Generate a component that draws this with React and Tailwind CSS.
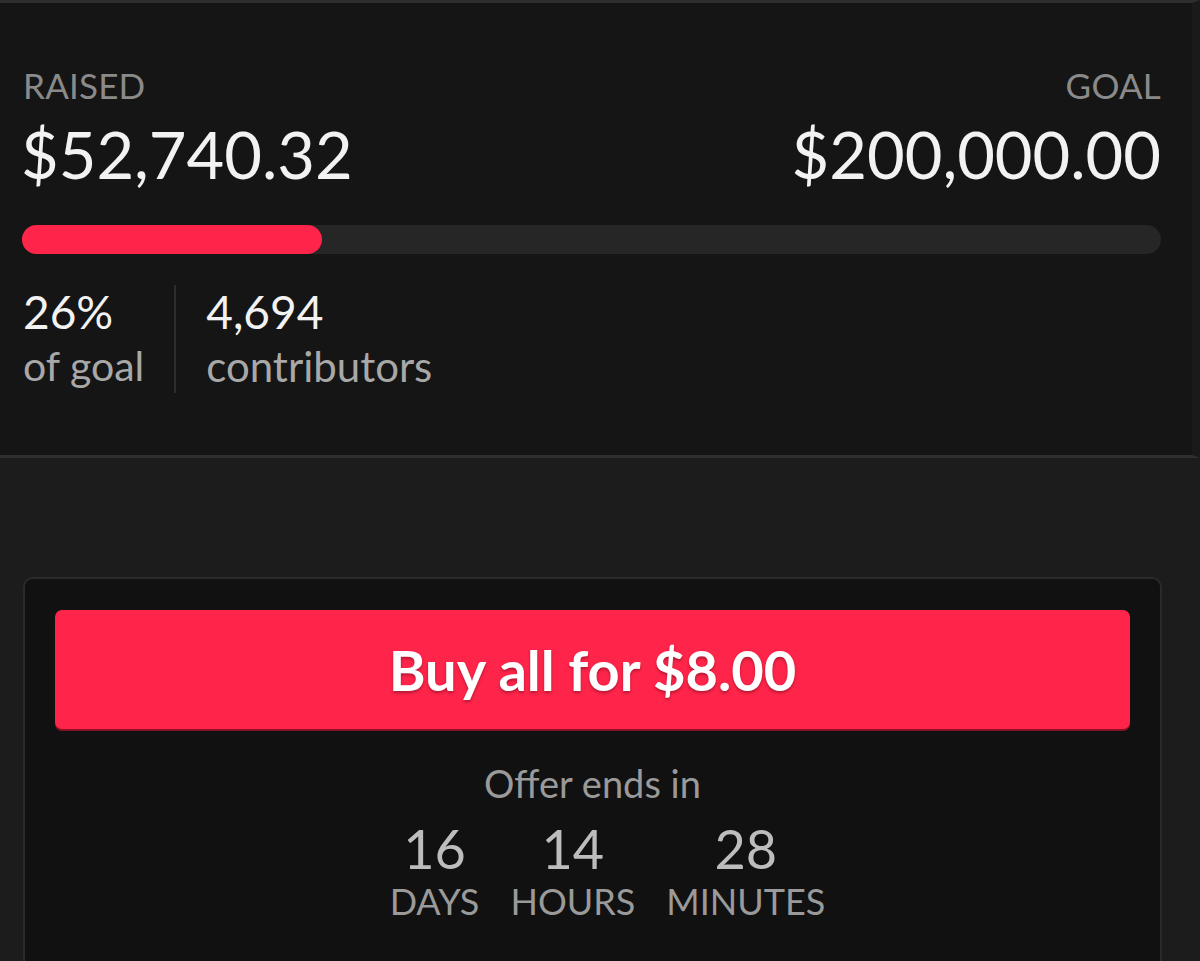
import React from "react";

const raised = 52740.32;
const goal = 200000;

export default function App() {
  const pct = (raised / goal) * 100;

  return (
    <div className="min-h-[961px] w-[1200px] bg-[#1c1c1c] font-['Lato','Noto_Sans',sans-serif] overflow-hidden">
      {/* Funding summary */}
      <section className="bg-[#151515] border-t-[3px] border-[#2e2e2e] border-b-[3px] border-b-[#2f2f2f] border-r-[8px] border-r-[#1a1a1a] pl-[23px] pr-[31px] pt-[61px] h-[458px]">
        <div className="flex justify-between">
          <div>
            <div className="text-[35px] leading-[42px] text-[#8a8a8a] tracking-[0.2px]">RAISED</div>
            <div className="mt-[8px] text-[65px] leading-[80px] text-[#f2f2f2] -ml-[2px]">$52,740.32</div>
          </div>
          <div className="text-right">
            <div className="text-[35px] leading-[42px] text-[#8a8a8a] tracking-[0.2px]">GOAL</div>
            <div className="mt-[8px] text-[65px] leading-[80px] text-[#f2f2f2]">$200,000.00</div>
          </div>
        </div>

        <div className="mt-[31px] h-[29px] rounded-full bg-[#262626] -ml-px">
          <div className="h-full rounded-full bg-[#ff2449]" style={{ width: `${pct}%` }} />
        </div>

        <div className="flex mt-[31px]">
          <div className="pr-[30px] border-r-2 border-[#2c2c2c]">
            <div className="text-[46px] leading-[54px] text-[#f2f2f2]">26%</div>
            <div className="text-[41px] leading-[54px] text-[#a8a8a8]">of goal</div>
          </div>
          <div className="pl-[30px]">
            <div className="text-[46px] leading-[54px] text-[#f2f2f2]">4,694</div>
            <div className="text-[42px] leading-[54px] text-[#a8a8a8]">contributors</div>
          </div>
        </div>
      </section>

      {/* Offer card */}
      <div className="pt-[119px] pl-[23px] pr-[38px]">
        <div className="rounded-[10px] border-2 border-[#2a2a2a] bg-[#111111] px-[30px] pt-[31px] pb-[30px] h-[400px]">
          <button className="w-full h-[119px] rounded-[7px] bg-[#ff2449] shadow-[0_2px_0_#8a1024] text-white font-bold text-[56px] [text-shadow:0_2px_3px_rgba(0,0,0,0.3)]">
            Buy all for $8.00
          </button>
          <div className="mt-[31px] text-center text-[38px] leading-[46px] text-[#9a9a9a]">Offer ends in</div>
          <div className="flex justify-center gap-[31px] mt-[16px] ml-[30px]">
            {[
              ["16", "DAYS"],
              ["14", "HOURS"],
              ["28", "MINUTES"],
            ].map(([n, l]) => (
              <div key={l} className="text-center">
                <div className="text-[54px] leading-[54px] text-[#bdbdbd]">{n}</div>
                <div className="text-[36px] leading-[50px] text-[#9a9a9a]">{l}</div>
              </div>
            ))}
          </div>
        </div>
      </div>
    </div>
  );
}
